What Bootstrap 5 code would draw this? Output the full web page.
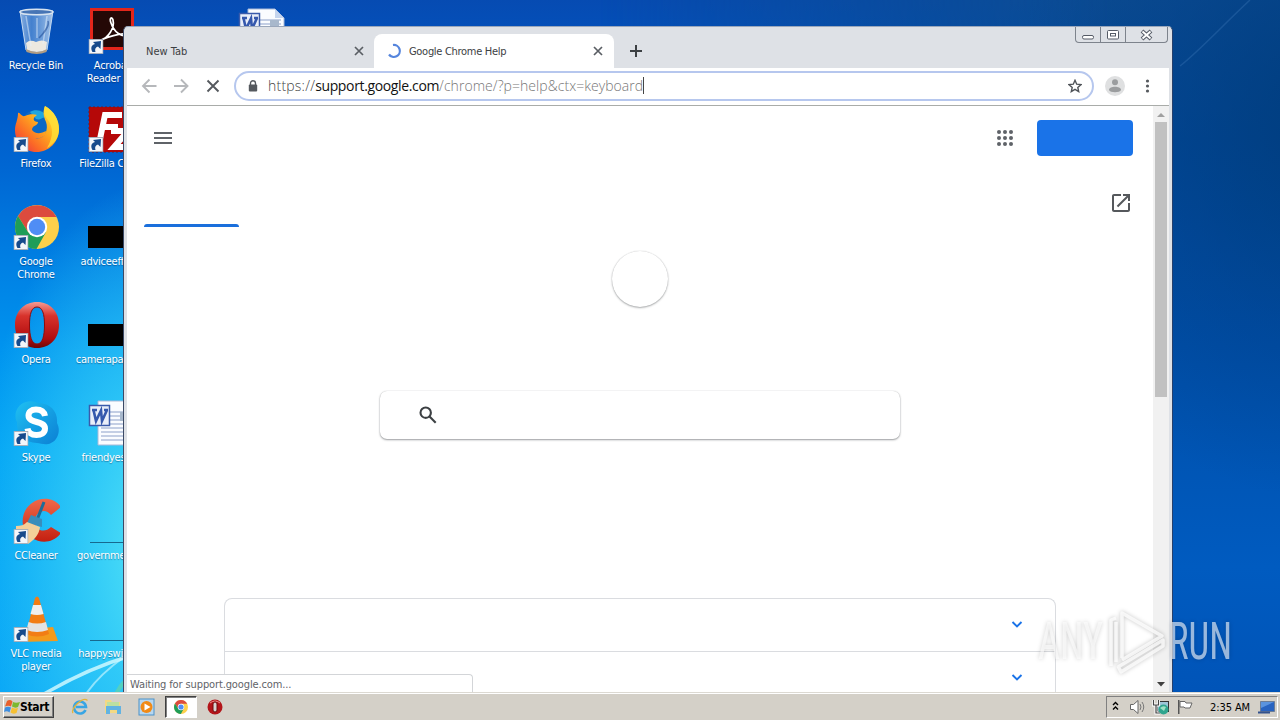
<!DOCTYPE html>
<html lang="en">
  <head>
    <meta charset="UTF-8" />
    <meta name="viewport" content="width=device-width, initial-scale=1.0" />
    <title>Google Chrome Help</title>
    <link
      href="https://cdn.jsdelivr.net/npm/bootstrap@5.3.0/dist/css/bootstrap.min.css"
      rel="stylesheet"
    />
    <style>
      body {
        width: 1280px;
        height: 720px;
        font-family: "DejaVu Sans Condensed", "DejaVu Sans", sans-serif;
        font-stretch: condensed;
        font-size: 11px;
        line-height: 13px;
        color: #222;
      }
      svg { display: block; flex: none; }

      /* desktop */
      .desktop {
        height: 692px;
        background:
          radial-gradient(ellipse 190px 370px at 160px 550px, rgba(90, 232, 246, .95), rgba(58, 210, 248, .8) 40%, rgba(0, 160, 240, 0)),
          linear-gradient(180deg, #064bb2 0, #0058c6 90px, #0067d3 170px, #007fe3 260px, #0094ef 350px, #00a2f4 450px, #06a4f6 692px);
      }
      .night {
        width: 680px;
        height: 692px;
        background:
          radial-gradient(ellipse 300px 380px at 105% 17%, rgba(0, 60, 124, .85), rgba(0, 62, 134, .4) 55%, rgba(0, 70, 150, 0)),
          linear-gradient(180deg, #0c4c92 0, #024896 20%, #004fa9 50%, #005bc0 82%, #0054b8 100%);
        -webkit-mask-image: linear-gradient(90deg, transparent, #000 75%);
        mask-image: linear-gradient(90deg, transparent, #000 75%);
      }
      .icon-col { width: 76px; padding-top: 8px; }
      .icon-col-empty { width: 74px; }
      .icon-cell { height: 98px; width: 72px; color: #fff; text-shadow: 0 1px 1px rgba(0, 20, 60, .4); }
      .icon-cell span { margin-top: 3px; white-space: nowrap; letter-spacing: -.25px; }

      /* browser window */
      .browser {
        left: 123px;
        top: 26px;
        width: 1050px;
        height: 666px;
        padding: 0 3px;
        background: #dee1e6;
        border-left: 1px solid #3c4a66;
        border-top: 1px solid #9aa7bb;
        border-right: 1px solid #27406c;
        border-radius: 5px 5px 0 0;
      }
      .tab-strip { height: 41px; padding-top: 7px; }
      .tab-item { height: 34px; color: #3c4043; letter-spacing: -.3px; }
      .tab-idle { width: 247px; padding: 0 10px 0 19px; letter-spacing: 0; }
      .tab-live { width: 240px; padding: 0 11px 0 12px; background: #fff; border-radius: 8px 8px 0 0; }
      .tab-title { margin-left: 7px; }
      .caps { height: 16px; margin: -7px 1px 0 auto; border: 1px solid #7d838c; border-top: 0; border-radius: 0 0 4px 4px; }
      .caps div { width: 25px; border-right: 1px solid #7d838c; }
      .caps div:last-child { width: 41px; border: 0; }
      .tool-row { height: 38px; padding-bottom: 1px; background: #fff; border-bottom: 1px solid #a9aca9; }
      .omnibox {
        width: 860px;
        height: 30px;
        margin-left: 11px;
        padding: 0 10px 0 12px;
        border: 2px solid #b6c7ee;
        border-radius: 15px;
        font-family: "Open Sans", "Noto Sans", sans-serif;
        font-stretch: normal;
        font-weight: 300;
        font-size: 14px;
        color: #777;
      }
      .address { margin: -1px 0 0 10px; white-space: nowrap; letter-spacing: .05px; }
      .address .scheme { color: #444; letter-spacing: .22px; }
      .address .host { color: #111; font-weight: 400; letter-spacing: -.36px; }
      .caret { width: 1px; height: 17px; background: #444; }

      /* help page */
      .page { height: 586px; background: #fff; }
      .page-head { height: 64px; padding: 0 20px 0 27px; }
      .signin { width: 96px; height: 36px; margin-left: 24px; background: #1a73e8; border-radius: 4px; }
      .page-tabs { height: 57px; padding: 0 23px 0 17px; }
      .tab-mark { width: 95px; height: 3px; background: #1a6fdc; border-radius: 3px 3px 0 0; }
      .open-out { margin-bottom: 15px; }
      .round { width: 56px; height: 56px; margin-top: 24px; border-radius: 50%; background: #fff; box-shadow: 0 1px 2px rgba(60, 64, 67, .42), 0 0 1px rgba(60, 64, 67, .3); }
      .search-box { width: 520px; height: 48px; margin-top: 84px; padding-left: 39px; border-radius: 7px; background: #fff; box-shadow: 0 1px 2px rgba(60, 64, 67, .5), 0 0 1px rgba(60, 64, 67, .3); }
      .topics { width: 832px; margin-top: 159px; border: 1px solid #dadce0; border-bottom: 0; border-radius: 8px 8px 0 0; }
      .topic { height: 53px; padding: 0 32px 2px 0; border-bottom: 1px solid #dadce0; }
      .scroller { width: 16px; background: #f1f1f1; }
      .thumb { width: 12px; height: 275px; background: #c1c1c1; }
      .status-text { left: 3px; bottom: 0; width: 346px; height: 18px; padding: 3px 0 0 3px; background: #fff; border: 1px solid #d3d5d8; border-left: 0; border-bottom: 0; border-radius: 0 4px 0 0; color: #5f6368; letter-spacing: -.12px; }
      .watermark { left: 1030px; top: 600px; }

      /* taskbar */
      .taskbar { height: 28px; padding: 1px 2px 0 3px; background: #d4d0c8; border-top: 1px solid #dcd9d2; box-shadow: inset 0 1px #fff; }
      .start { width: 51px; height: 22px; border: 1px solid; border-color: #fff #404040 #404040 #fff; box-shadow: inset -1px -1px #808080; font-size: 12px; font-weight: 700; color: #000; letter-spacing: -.35px; }
      .launch { width: 32px; height: 22px; margin-right: 2px; }
      .launch-first { margin: 0 1px 0 10px; }
      .launch.pressed { background: #fff; border: 1px solid; border-color: #404040 #fff #fff #404040; box-shadow: inset 1px 1px #808080; }
      .tray { width: 172px; height: 22px; padding: 0 1px 0 4px; border: 1px solid; border-color: #808080 #fff #fff #808080; color: #000; letter-spacing: -.1px; }
    </style>
  </head>

  <body class="overflow-hidden">
    <!-- shared symbols -->
    <svg width="0" height="0" class="position-absolute">
      <defs>
        <linearGradient id="gOpera" x1="0" y1="0" x2="0" y2="1">
          <stop offset="0" stop-color="#f59a92" /><stop offset=".3" stop-color="#d8332c" /><stop offset=".8" stop-color="#b00c0e" /><stop offset="1" stop-color="#6e0606" />
        </linearGradient>
        <linearGradient id="gFox" x1="1" y1="0" x2="0" y2="1">
          <stop offset="0" stop-color="#fff04a" /><stop offset=".4" stop-color="#ffb01f" /><stop offset=".7" stop-color="#fb6a26" /><stop offset="1" stop-color="#e6254d" />
        </linearGradient>
        <linearGradient id="gSkype" x1="0" y1="0" x2="1" y2="1">
          <stop offset="0" stop-color="#1fc0f2" /><stop offset="1" stop-color="#0b80d4" />
        </linearGradient>
        <linearGradient id="gBin" x1="0" y1="0" x2="1" y2="0">
          <stop offset="0" stop-color="#a8c6ea" stop-opacity=".8" /><stop offset=".35" stop-color="#5f96d8" stop-opacity=".7" /><stop offset="1" stop-color="#c0d8f2" stop-opacity=".85" />
        </linearGradient>
        <linearGradient id="gCc" x1="0" y1="0" x2="0" y2="1">
          <stop offset="0" stop-color="#f0694a" /><stop offset="1" stop-color="#c41f10" />
        </linearGradient>
        <symbol id="link" viewBox="0 0 15 15">
          <rect x=".5" y=".5" width="14" height="14" fill="#f3f6fa" stroke="#a8b0bb" />
          <path d="M4 13C2 9.500 2.500 6 6.500 5L4.500 3L12.500 2L12 10L9.500 7.500C7 8.500 6 10 7 13Z" fill="#164a8c" />
        </symbol>
        <symbol id="chrome" viewBox="0 0 44 44">
          <circle cx="22" cy="22" r="22" fill="#fdd04b" />
          <path d="M3 11A22 22 0 0 1 41.500 12H22L13 27Z" fill="#dc4b3e" />
          <path d="M3 11A22 22 0 0 0 21.500 44L31 27L22 32L13 27Z" fill="#1f9d58" />
          <circle cx="22" cy="22" r="10.200" fill="#fff" />
          <circle cx="22" cy="22" r="8.200" fill="#4f8df5" />
        </symbol>
        <symbol id="opera" viewBox="0 0 44 46">
          <path fill-rule="evenodd" d="M22 0C35 0 44 9.500 44 23S35 46 22 46S0 36.500 0 23S9 0 22 0ZM22 5C16.500 5 14.500 12 14.500 23S16.500 42 22 42S29.500 34 29.500 23S27.500 5 22 5Z" fill="url(#gOpera)" />
          <path fill="none" stroke="#8d0b0c" d="M22 5C16.500 5 14.500 12 14.500 23S16.500 42 22 42S29.500 34 29.500 23S27.500 5 22 5Z" />
        </symbol>
        <symbol id="word" viewBox="0 0 48 48">
          <path d="M10 1H37L46 10V45H10Z" fill="#fafcff" stroke="#a9b9d8" />
          <path d="M37 1V10H46Z" fill="#c4d4ee" />
          <path d="M13 12H43M13 16H43M13 20H43M13 24H43M13 28H43M13 32H43M13 36H43M13 40H43" stroke="#8c9fc9" stroke-width="1.200" />
          <rect x="32" y="12" width="9" height="9" fill="#a8b8cc" />
          <rect x="1.500" y="5.500" width="20" height="20" fill="#e9eef9" stroke="#3a5bab" stroke-width="1.500" />
          <path d="M4 10H9M5.500 10L8 21L13 10.500L14 21L19 10M16 10H20" fill="none" stroke="#3558ad" stroke-width="2.600" />
        </symbol>
      </defs>
    </svg>

    <main class="desktop position-relative overflow-hidden">
      <div class="night position-absolute top-0 end-0"></div>
      <!-- light streaks of the wallpaper -->
      <svg class="position-absolute top-0 start-0" width="1280" height="692" fill="none">
        <path d="M44 694C68 680 96 666 130 656" stroke="#d8fbff" stroke-width="3.500" opacity=".8" />
        <path d="M86 694C94 682 106 670 124 657" stroke="#c9f6ff" stroke-width="2" opacity=".65" />
        <path d="M116 694C119 688 122 684 126 680" stroke="#6bd79c" stroke-width="4" opacity=".6" />
        <path d="M1180 66C1200 50 1218 30 1250 0" stroke="#6aa2dc" stroke-width="1.500" opacity=".2" />
      </svg>

      <div class="position-relative d-flex h-100">
        <div class="icon-col">
          <div class="icon-cell d-flex flex-column align-items-center text-center">
            <svg width="48" height="48" viewBox="0 0 48 48">
              <path d="M8 3L14 42Q25 47 35 42L41 3Z" fill="url(#gBin)" stroke="#c3d9f1" />
              <path d="M14 35Q18 31 24 34Q30 31 35 34L34 42Q25 46 15 42Z" fill="#ece8e0" />
              <path d="M14 8L19 38M35 8L31 36M25 10V30" stroke="#e4f0fc" stroke-width="1.500" opacity=".5" />
              <path d="M36 13C38 18 30 27 27 30" fill="none" stroke="#214f9a" stroke-width="1.500" opacity=".6" />
              <ellipse cx="24.500" cy="4" rx="16.500" ry="2.800" fill="#4775b5" stroke="#d7e3f0" stroke-width="1.500" />
              <path d="M14 41Q25 47 35 41L34.500 44Q25 48 14.500 44Z" fill="#b09c83" />
            </svg>
            <span>Recycle Bin</span>
          </div>
          <div class="icon-cell d-flex flex-column align-items-center text-center">
            <svg width="48" height="48" viewBox="0 0 48 48">
              <circle cx="25" cy="21" r="17" fill="#0c68c4" />
              <path d="M18 6C24 2 33 5 35 12C30 10 29 15 24 13Z" fill="#1fa6e0" />
              <path d="M6 7C8 6 9 11 13 10C17 8 22 8 25 9C20 12 21 16 26 16C26 20 20 19 20 24C24 29 30 27 34 25C33 32 26 33 23 32C32 35 37 24 34 16C31 9 31 5 33 0C42 5 47 14 47 23C47 36 37 46 24.500 46S3 36 3 24C3 18 6 14 6 7Z" fill="url(#gFox)" />
              <path d="M33 0C42 5 47 14 47 23C47 32 42 38 35 42C42 30 41 21 36 14C32 9 31 5 33 0Z" fill="#ffe23a" opacity=".75" />
              <use href="#link" x="1.500" y="31" width="15" height="15" />
            </svg>
            <span>Firefox</span>
          </div>
          <div class="icon-cell d-flex flex-column align-items-center text-center">
            <svg width="48" height="48" viewBox="0 0 48 48">
              <use href="#chrome" x="3" y="1" width="44" height="44" />
              <use href="#link" x="1.500" y="31" width="15" height="15" />
            </svg>
            <span>Google<br />Chrome</span>
          </div>
          <div class="icon-cell d-flex flex-column align-items-center text-center">
            <svg width="48" height="48" viewBox="0 0 48 48">
              <use href="#opera" x="3" y="0" width="44" height="46" />
              <use href="#link" x="1.500" y="31" width="15" height="15" />
            </svg>
            <span>Opera</span>
          </div>
          <div class="icon-cell d-flex flex-column align-items-center text-center">
            <svg width="48" height="48" viewBox="0 0 48 48">
              <path d="M14 2C20 0 24 3 28 3C39 4 46 12 45 23C49 30 46 40 39 43C33 46 29 43 25 43C13 43 4 34 5 22C1 15 5 4 14 2Z" fill="url(#gSkype)" />
              <path d="M33 16C32 11 28 9.500 24 9.500C19 9.500 16.500 12 16.500 15.500C16.500 24 33 20 33 28.500C33 33 29 35 24.500 35C19 35 16 32 15.500 28.500" fill="none" stroke="#fff" stroke-width="6" />
              <use href="#link" x="1.500" y="31" width="15" height="15" />
            </svg>
            <span>Skype</span>
          </div>
          <div class="icon-cell d-flex flex-column align-items-center text-center">
            <svg width="48" height="48" viewBox="0 0 48 48">
              <path d="M49 9L39 17C33 9 23 14 23 23C23 32 32 36 39 29L49 35C42 45 29 46 20 40C7 33 8 13 20 5C30 -2 43 0 49 9Z" fill="url(#gCc)" />
              <path d="M32 4L25 22" stroke="#1d6c98" stroke-width="3" />
              <path d="M19 17L30 21V29L15 25Z" fill="#398dbb" />
              <path d="M15 24L28 29C27 37 22 42 16 46L4 35V28C9 28 12 27 15 24Z" fill="#f3cf9a" />
              <use href="#link" x="1.500" y="31" width="15" height="15" />
            </svg>
            <span>CCleaner</span>
          </div>
          <div class="icon-cell d-flex flex-column align-items-center text-center">
            <svg width="48" height="48" viewBox="0 0 48 48">
              <path d="M8 34L41 31L46 45L8 46Z" fill="#f39a1c" />
              <path d="M14 38L23 2Q25 -1 27 2L37 38Q25 43 14 38Z" fill="#f27d14" />
              <path d="M21 9H29L31.500 18Q25 20 18.500 18Z" fill="#efefef" />
              <path d="M16.500 26Q25 29 34 26L36 34Q25 38 14.500 34Z" fill="#e3e3e3" />
              <use href="#link" x="1.500" y="31" width="15" height="15" />
            </svg>
            <span>VLC media<br />player</span>
          </div>
        </div>

        <div class="icon-col">
          <div class="icon-cell d-flex flex-column align-items-center text-center">
            <svg width="48" height="48" viewBox="0 0 48 48">
              <rect x="3.500" y="1.500" width="41" height="39" fill="#240806" stroke="#e3261b" stroke-width="3" />
              <path d="M13 32C20 30 27 20 25 12C24 8 21 10 23 15C26 24 33 29 40 28C43 26 34 23 13 32Z" fill="none" stroke="#fff" stroke-width="1.700" />
              <use href="#link" x=".5" y="31" width="15" height="15" />
            </svg>
            <span>Acrobat<br />Reader DC</span>
          </div>
          <div class="icon-cell d-flex flex-column align-items-center text-center">
            <svg width="48" height="48" viewBox="0 0 48 48">
              <rect x="1" y="1" width="46" height="45" fill="#b50808" stroke="#7b1622" stroke-dasharray="2 2" />
              <path d="M12 33L17 9H34M15 21H30M23 25H40L26 41H42" fill="none" stroke="#fff" stroke-width="6" />
              <use href="#link" x=".5" y="31" width="15" height="15" />
            </svg>
            <span>FileZilla Client</span>
          </div>
          <div class="icon-cell d-flex flex-column align-items-center text-center">
            <svg width="48" height="48"><rect y="22" width="48" height="22" /></svg>
            <span>adviceeffects</span>
          </div>
          <div class="icon-cell d-flex flex-column align-items-center text-center">
            <svg width="48" height="48"><rect y="22" width="48" height="22" /></svg>
            <span>camerapart.jpg</span>
          </div>
          <div class="icon-cell d-flex flex-column align-items-center text-center">
            <svg width="48" height="48"><use href="#word" width="48" height="48" /></svg>
            <span>friendyest.rtf</span>
          </div>
          <div class="icon-cell d-flex flex-column align-items-center text-center">
            <svg width="48" height="48"><path d="M2 44.500H48" stroke="#17698f" /></svg>
            <span>governmentup</span>
          </div>
          <div class="icon-cell d-flex flex-column align-items-center text-center">
            <svg width="48" height="48"><path d="M2 44.500H48" stroke="#17698f" /></svg>
            <span>happyswim.rtf</span>
          </div>
        </div>

        <div class="icon-col-empty"></div>
        <div class="icon-col">
          <div class="icon-cell d-flex flex-column align-items-center">
            <svg width="48" height="48"><use href="#word" width="48" height="48" /></svg>
          </div>
        </div>
      </div>

      <section class="browser position-absolute">
        <div class="tab-strip d-flex">
          <div class="tab-item tab-idle d-flex align-items-center justify-content-between">
            New Tab
            <svg width="10" height="10" viewBox="0 0 10 10"><path d="M1 1L9 9M9 1L1 9" stroke="#5a5e64" stroke-width="1.700" /></svg>
          </div>
          <div class="tab-item tab-live d-flex align-items-center">
            <svg width="16" height="16" viewBox="0 0 16 16"><path d="M7 2A6 6 0 1 1 3 11.500" fill="none" stroke="#5585dd" stroke-width="2.200" /></svg>
            <span class="tab-title me-auto">Google Chrome Help</span>
            <svg width="10" height="10" viewBox="0 0 10 10"><path d="M1 1L9 9M9 1L1 9" stroke="#5a5e64" stroke-width="1.700" /></svg>
          </div>
          <div class="tab-item d-flex align-items-center ps-3">
            <svg width="12" height="12" viewBox="0 0 12 12"><path d="M6 0V12M0 6H12" stroke="#3c4043" stroke-width="2" /></svg>
          </div>
          <div class="caps d-flex">
            <div><svg width="24" height="15" fill="#fff" stroke="#555b66"><rect x="6.500" y="8.500" width="11" height="3.500" rx="1.500" /></svg></div>
            <div><svg width="24" height="15" fill="#fff" stroke="#555b66"><rect x="6.500" y="3.500" width="11" height="8.500" rx="1" /><rect x="9.500" y="6.500" width="5" height="2.500" /></svg></div>
            <div><svg width="41" height="15"><path d="M16 4L25 12M25 4L16 12" stroke="#555b66" stroke-width="4" /><path d="M16.500 4.500L24.500 11.500M24.500 4.500L16.500 11.500" stroke="#fff" stroke-width="2" /></svg></div>
          </div>
        </div>

        <div class="tool-row d-flex align-items-center">
          <svg width="96" height="16" viewBox="0 0 96 16" fill="none" stroke-width="1.900">
            <path d="M29.500 8H16M22.500 1.500L16 8L22.500 14.500" stroke="#b6b8bb" />
            <path d="M47 8H60.500M54 1.500L60.500 8L54 14.500" stroke="#b6b8bb" />
            <path d="M80.500 2.500L91.500 13.500M91.500 2.500L80.500 13.500" stroke="#55595e" />
          </svg>
          <div class="omnibox d-flex align-items-center">
            <svg width="10" height="12" viewBox="0 0 10 12"><path d="M2.500 5V3.200A2.500 2.500 0 0 1 7.500 3.200V5" fill="none" stroke="#55595e" stroke-width="1.400" /><rect x=".8" y="4.500" width="8.400" height="7" rx="1" fill="#55595e" /></svg>
            <div class="address d-flex align-items-center"><span class="scheme">https://</span><span class="host">support.google.com</span><span>/chrome/?p=help&amp;ctx=keyboard</span><span class="caret"></span></div>
            <svg class="ms-auto" width="14" height="14" viewBox="0 0 14 14"><path d="M7 1.300L8.700 5.200L13 5.600L9.800 8.400L10.700 12.600L7 10.400L3.300 12.600L4.200 8.400L1 5.600L5.300 5.200Z" fill="none" stroke="#4f5358" stroke-width="1.400" /></svg>
          </div>
          <svg class="ms-auto" width="20" height="20" viewBox="0 0 20 20"><circle cx="10" cy="10" r="10" fill="#dfe0e1" /><circle cx="10" cy="6.300" r="3" fill="#9b9d9f" /><path d="M4 14C4 9.800 16 9.800 16 14C15 17 5 17 4 14Z" fill="#9b9d9f" /></svg>
          <svg width="44" height="16" viewBox="0 0 44 16" fill="#55595e"><circle cx="22.500" cy="3" r="1.600" /><circle cx="22.500" cy="8" r="1.600" /><circle cx="22.500" cy="13" r="1.600" /></svg>
        </div>

        <div class="page d-flex overflow-hidden">
          <div class="flex-grow-1">
            <div class="page-head d-flex align-items-center">
              <svg class="me-auto" width="18" height="12" viewBox="0 0 18 12"><path d="M0 1H18M0 6H18M0 11H18" stroke="#5f6368" stroke-width="2" /></svg>
              <svg width="16" height="16" viewBox="0 0 16 16" fill="#5f6368">
                <circle cx="2" cy="2" r="2" /><circle cx="8" cy="2" r="2" /><circle cx="14" cy="2" r="2" />
                <circle cx="2" cy="8" r="2" /><circle cx="8" cy="8" r="2" /><circle cx="14" cy="8" r="2" />
                <circle cx="2" cy="14" r="2" /><circle cx="8" cy="14" r="2" /><circle cx="14" cy="14" r="2" />
              </svg>
              <div class="signin"></div>
            </div>
            <div class="page-tabs d-flex align-items-end justify-content-between">
              <div class="tab-mark"></div>
              <svg class="open-out" width="18" height="18" viewBox="0 0 18 18"><path d="M16 16H2V2H9V0H2C.9 0 0 .9 0 2V16C0 17.100.9 18 2 18H16C17.100 18 18 17.100 18 16V9H16V16ZM11 0V2H14.590L4.760 11.830L6.170 13.240L16 3.410V7H18V0H11Z" fill="#55585c" /></svg>
            </div>
            <div class="d-flex flex-column align-items-center">
              <div class="round"></div>
              <div class="search-box d-flex align-items-center">
                <svg width="18" height="18" viewBox="0 0 18 18" fill="none" stroke="#3c4043" stroke-width="2.100"><circle cx="6.700" cy="6.700" r="5.200" /><path d="M10.500 10.500L16.700 16.700" /></svg>
              </div>
              <div class="topics">
                <div class="topic d-flex align-items-center justify-content-end"><svg width="12" height="7" viewBox="0 0 12 7"><path d="M1.500 1L6 5.500L10.500 1" fill="none" stroke="#1a73e8" stroke-width="1.900" /></svg></div>
                <div class="topic d-flex align-items-center justify-content-end"><svg width="12" height="7" viewBox="0 0 12 7"><path d="M1.500 1L6 5.500L10.500 1" fill="none" stroke="#1a73e8" stroke-width="1.900" /></svg></div>
              </div>
            </div>
          </div>
          <div class="scroller d-flex flex-column align-items-center">
            <svg width="16" height="16"><path d="M4 11L8 7L12 11Z" fill="#a0a0a0" /></svg>
            <div class="thumb"></div>
            <svg class="mt-auto" width="16" height="16"><path d="M4 6L8 10.500L12 6Z" fill="#404040" /></svg>
          </div>
        </div>
        <div class="status-text position-absolute">Waiting for support.google.com...</div>
      </section>

      <!-- translucent logo over everything -->
      <svg class="watermark position-absolute" width="230" height="90" style="filter: drop-shadow(0 0 2px rgba(0, 0, 0, .3))">
        <g font-family="Roboto" font-size="52" fill="#fff" fill-opacity=".6">
          <text x="8" y="59" textLength="65" lengthAdjust="spacingAndGlyphs">ANY</text>
          <text x="139" y="59" textLength="63" lengthAdjust="spacingAndGlyphs">RUN</text>
        </g>
        <g fill="none" stroke="#fff" stroke-opacity=".75" stroke-width="3.500" stroke-linejoin="round">
          <path d="M92 58V13L132 36L92 60" />
          <path d="M86 18L81 20V66M86 22V62M88 66L91 72L133 46V40L88 67" />
        </g>
      </svg>
    </main>

    <footer class="taskbar d-flex align-items-center">
      <div class="start d-flex align-items-center">
        <svg width="16" height="16" viewBox="0 0 16 16">
          <path d="M3 2Q6 0 8.500 2.500L7 7.500Q4.500 6 1 7.500Z" fill="#e8602c" />
          <path d="M9 3Q12 4.500 16 3L14 8Q11 9.500 8 7.500Z" fill="#7cb82f" />
          <path d="M1 8.500Q4 7 7 8.500L5.500 13.500Q3 11.500 0 13Z" fill="#3d8ee0" />
          <path d="M8 8.500Q11 10 14 9L12.500 14Q9 15.500 6.500 13.500Z" fill="#f6c032" />
        </svg>
        <span>Start</span>
      </div>
      <div class="launch launch-first d-flex align-items-center justify-content-center">
        <svg width="18" height="18" viewBox="0 0 18 18" fill="none"><path d="M14.500 12A6 6 0 1 1 15 9H5" stroke="#38a5e4" stroke-width="2.600" /><path d="M2 15C-1 11 12-2 16.500 2.500" stroke="#e4b43a" stroke-width="1.300" /></svg>
      </div>
      <div class="launch d-flex align-items-center justify-content-center">
        <svg width="18" height="18" viewBox="0 0 18 18"><path d="M1 2H7L8 4H16V15H1Z" fill="#f3d983" /><path d="M3 4H15V8H3Z" fill="#bde0a0" /><path d="M2 8H17V16H13V12H6V16H2Z" fill="#62b3e2" /></svg>
      </div>
      <div class="launch d-flex align-items-center justify-content-center">
        <svg width="18" height="18" viewBox="0 0 18 18"><rect x="1" y="1" width="15" height="16" fill="#b7d7f0" stroke="#4b91c8" /><circle cx="8.500" cy="9" r="6" fill="#f18a16" /><path d="M6.500 5.500L12.500 9L6.500 12.500Z" fill="#fff" /></svg>
      </div>
      <div class="launch pressed d-flex align-items-center justify-content-center">
        <svg width="14" height="14"><use href="#chrome" width="14" height="14" /></svg>
      </div>
      <div class="launch d-flex align-items-center justify-content-center">
        <svg width="16" height="16" viewBox="0 0 16 16"><circle cx="8" cy="8" r="7.500" fill="#b3151a" /><path d="M3 4Q8 0 13 4" stroke="#ee918c" fill="none" /><rect x="6" y="3" width="4" height="10" rx="2" fill="#d9d3d0" stroke="#6e0a0c" /></svg>
      </div>

      <div class="tray d-flex align-items-center ms-auto">
        <svg width="9" height="12" viewBox="0 0 9 12" fill="none" stroke="#000" stroke-width="1.400"><path d="M2 4L4.500 1.500L7 4M2 8.500L4.500 6L7 8.500" /></svg>
        <svg width="20" height="18" viewBox="-1 0 20 18" class="ms-2"><path d="M1.500 6.500H4.500L9 2.500V15.500L4.500 11.500H1.500Z" fill="#fff" stroke="#666" /><path d="M11 6Q13 9 11 12M13 4Q16.500 9 13 14" fill="none" stroke="#777" /></svg>
        <svg width="18" height="18" viewBox="0 0 18 18" class="ms-1"><rect x="5.500" y="3.500" width="11" height="10" fill="#9ec5d8" stroke="#333" /><path d="M1.500 2V7H6.500V2M4 7V15H8" fill="none" stroke="#fff" stroke-width="3" /><path d="M1.500 2V7H6.500V2M4 7V15H8" fill="none" stroke="#444" stroke-width="1.200" /><circle cx="11.500" cy="11.500" r="5" fill="#2fa58e" /><path d="M8 10Q11 7 14 9L12 13Z" fill="#9fe0c4" /></svg>
        <svg width="18" height="18" viewBox="2 0 18 18" class="ms-2"><path d="M2.500 2V16" stroke="#555" stroke-width="2" /><path d="M4 3.500H9L10 5H16L14 10H9L8 9H4Z" fill="#fff" stroke="#666" /></svg>
        <span class="ms-auto me-2">2:35 AM</span>
        <svg width="18" height="16" viewBox="0 0 18 16"><path d="M2.500 2.500H16.500V12.500H2.500Z" fill="#2863c0" stroke="#6c7d96" /><path d="M3 3H16L3 9Z" fill="#5a93de" /><path d="M0 13.500H12" stroke="#32518c" stroke-width="2" /></svg>
      </div>
    </footer>

    <script src="https://cdn.jsdelivr.net/npm/bootstrap@5.3.0/dist/js/bootstrap.bundle.min.js"></script>
  </body>
</html>
